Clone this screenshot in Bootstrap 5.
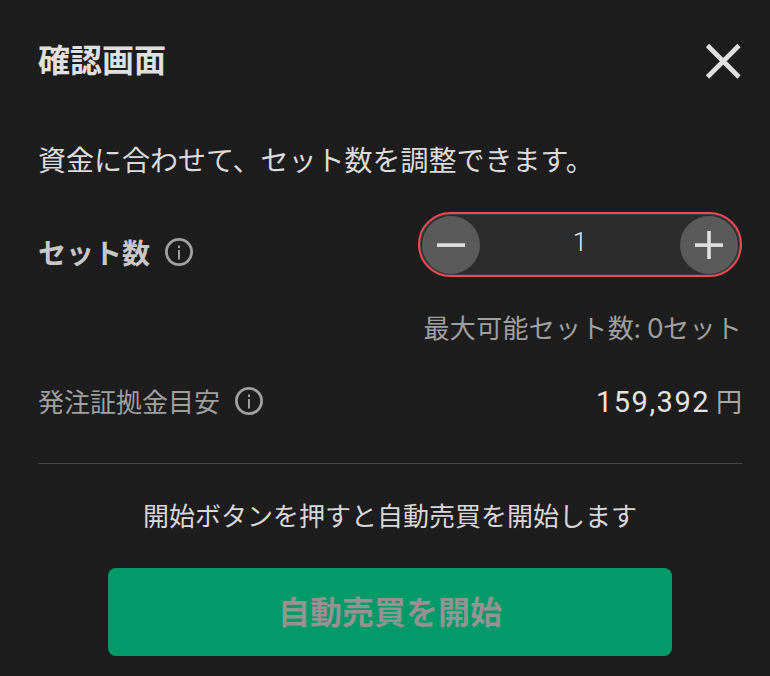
<!DOCTYPE html>
<html lang="ja">
<head>
<meta charset="utf-8">
<title>確認画面</title>
<link href="https://cdn.jsdelivr.net/npm/bootstrap@5.3.0/dist/css/bootstrap.min.css" rel="stylesheet">
<style>
html, body { height: 100%; }
body { background: #1d1d1d; color: #e0e0e0; font-family: "Noto Sans CJK JP", "Noto Sans", sans-serif; overflow: hidden; }
.sheet { padding: 34px 28px 20px 38px; }
.head-title { font-size: 32px; font-weight: 700; line-height: 48px; margin: 0; color: #e0e0e0; }
.close-x { width: 38px; height: 38px; padding: 0; border: 0; background: none; display: block; margin-top: 6px; }
.intro { font-size: 28px; line-height: 42px; margin: 56px 0 0; color: #dcdcdc; }
.set-row { margin-top: 32px; height: 65px; }
.label-group { gap: 15px; }
.set-shift { padding-top: 14px; }
.set-label { font-size: 28px; font-weight: 700; line-height: 42px; color: #c8c8c8; }
.info-ico { width: 28px; height: 28px; display: block; flex: none; }
.stepper { width: 324px; height: 65px; border: 2px solid #f04b55; border-radius: 33px; background: #2c2c2c; padding: 2px; box-shadow: inset 0 0 0 1px #3d3d3d; }
.step-btn { width: 58px; height: 58px; padding: 0; border: 0; border-radius: 50%; background: #5a5a5a; display: flex; align-items: center; justify-content: center; flex: none; }
.step-val { font-family: Roboto, sans-serif; font-size: 26px; color: #e6e6e6; line-height: 1; font-weight: 300; padding-bottom: 6px; }
.limit { font-family: Lato, "Noto Sans CJK JP", sans-serif; font-size: 26px; line-height: 38px; color: #a0a0a0; text-align: right; margin-top: 32px; letter-spacing: .3px; }
.margin-row { margin-top: 35px; height: 38px; }
.margin-label { font-size: 26px; line-height: 38px; color: #a0a0a0; }
.margin-val { font-family: Roboto, "Noto Sans CJK JP", sans-serif; font-size: 29px; font-weight: 400; line-height: 38px; color: #e4e4e4; letter-spacing: 1.5px; }
.margin-unit { font-family: "Noto Sans CJK JP", sans-serif; font-size: 26px; font-weight: 400; color: #a8a8a8; margin-left: 6px; letter-spacing: 0; }
.rule { border-top: 1px solid #444; margin: 43px 0 0; opacity: 1; }
.notice { font-size: 26px; line-height: 38px; color: #d8d8d8; text-align: center; margin: 32px 0 0; }
.start-btn { display: block; width: 564px; height: 88px; margin: 34px auto 0; border: 0; border-radius: 8px; background: #039a69; color: #939393; font-size: 32px; font-weight: 700; line-height: 84px; padding: 0 0 4px; opacity: 1; }
.start-btn:disabled { background: #039a69; color: #939393; opacity: 1; }
</style>
</head>
<body>
<div class="sheet">
  <div class="d-flex justify-content-between align-items-center">
    <h1 class="head-title">確認画面</h1>
    <button class="close-x" type="button" aria-label="閉じる">
      <svg viewBox="0 0 38 38" width="38" height="38"><path d="M3.5 3.5 L35 35 M35 3.5 L3.5 35" stroke="#e0e0e0" stroke-width="4.6" fill="none"/></svg>
    </button>
  </div>
  <p class="intro">資金に合わせて、セット数を調整できます。</p>
  <div class="set-row d-flex justify-content-between align-items-center">
    <div class="d-flex align-items-center label-group set-shift">
      <span class="set-label">セット数</span>
      <svg class="info-ico" viewBox="0 0 28 28"><circle cx="14" cy="14" r="12.6" fill="none" stroke="#a0a0a0" stroke-width="2.8"/><rect x="13" y="12" width="2" height="9.5" fill="#a0a0a0"/><rect x="13" y="7.5" width="2" height="2.6" fill="#a0a0a0"/></svg>
    </div>
    <div class="stepper d-flex align-items-center justify-content-between">
      <button class="step-btn" type="button" aria-label="減らす"><svg viewBox="0 0 28 28" width="28" height="28"><rect y="12.3" width="28" height="3.6" fill="#e0e0e0"/></svg></button>
      <span class="step-val">1</span>
      <button class="step-btn" type="button" aria-label="増やす"><svg viewBox="0 0 28 28" width="28" height="28"><rect y="12.3" width="28" height="3.6" fill="#e0e0e0"/><rect x="12.2" width="3.6" height="28" fill="#e0e0e0"/></svg></button>
    </div>
  </div>
  <div class="limit">最大可能セット数: 0セット</div>
  <div class="margin-row d-flex justify-content-between align-items-center">
    <div class="d-flex align-items-center label-group">
      <span class="margin-label">発注証拠金目安</span>
      <svg class="info-ico" viewBox="0 0 28 28"><circle cx="14" cy="14" r="12.6" fill="none" stroke="#a0a0a0" stroke-width="2.8"/><rect x="13" y="12" width="2" height="9.5" fill="#a0a0a0"/><rect x="13" y="7.5" width="2" height="2.6" fill="#a0a0a0"/></svg>
    </div>
    <div class="margin-val">159,392<span class="margin-unit">円</span></div>
  </div>
  <hr class="rule">
  <p class="notice">開始ボタンを押すと自動売買を開始します</p>
  <button class="start-btn btn" type="button" disabled>自動売買を開始</button>
</div>
<script src="https://cdn.jsdelivr.net/npm/bootstrap@5.3.0/dist/js/bootstrap.bundle.min.js"></script>
</body>
</html>
